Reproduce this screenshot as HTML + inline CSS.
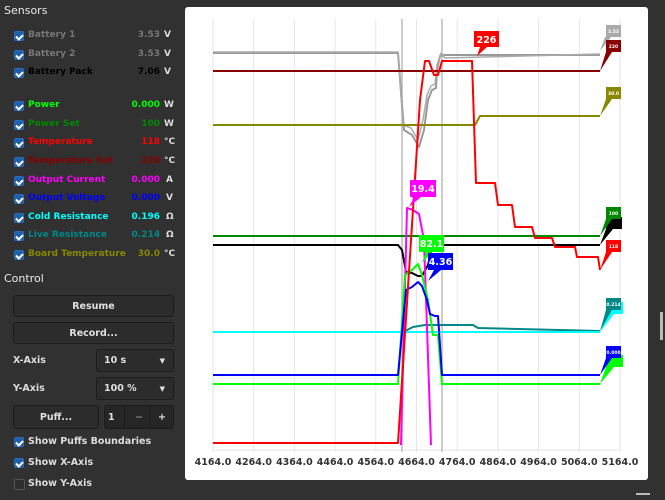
<!DOCTYPE html>
<html><head><meta charset="utf-8"><style>
*{margin:0;padding:0;box-sizing:border-box}
body{width:665px;height:500px;background:#313131;font-family:"DejaVu Sans","Liberation Sans",sans-serif;font-size:10px;color:#ddd;position:relative;overflow:hidden}
.a{position:absolute;white-space:nowrap}
.v{position:absolute;white-space:nowrap;right:505px;text-align:right}
.u{position:absolute;left:164px}
.h{font-size:11px;color:#e8e8e8}
.cb{position:absolute;width:10px;height:10px;border-radius:2px;background:#1d5fa8;border:1px solid #2a6cc0}
.cb:after{content:"";position:absolute;left:2px;top:1px;width:3px;height:5px;border:solid #fff;border-width:0 2px 2px 0;transform:rotate(45deg)}
.cbo{position:absolute;width:11px;height:11px;border-radius:2px;background:#2e2e2e;border:1px solid #555}
.b{font-weight:bold}
.btn{position:absolute;background:#2c2c2c;border:1px solid #1c1c1c;border-radius:3px;font-weight:bold;text-align:center;color:#e0e0e0;font-size:9.5px}
</style></head><body>
<div class="a h" style="left:4px;top:4px">Sensors</div>
<div class="a h" style="left:4px;top:272px">Control</div>

<div style="position:absolute;left:0;top:0;width:665px;font-weight:bold;font-size:9px">
<div class="cb" style="left:14px;top:31px"></div><div class="a" style="left:28px;top:30px;color:#777">Battery 1</div><div class="v" style="top:30px;color:#777">3.53</div><div class="u" style="top:30px">V</div>
<div class="cb" style="left:14px;top:50px"></div><div class="a" style="left:28px;top:49px;color:#777">Battery 2</div><div class="v" style="top:49px;color:#777">3.53</div><div class="u" style="top:49px">V</div>
<div class="cb" style="left:14px;top:68px"></div><div class="a" style="left:28px;top:67px;color:#000">Battery Pack</div><div class="v" style="top:67px;color:#000">7.06</div><div class="u" style="top:67px">V</div>

<div class="cb" style="left:14px;top:101px"></div><div class="a" style="left:28px;top:100px;color:#0f0">Power</div><div class="v" style="top:100px;color:#0f0">0.000</div><div class="u" style="top:100px">W</div>
<div class="cb" style="left:14px;top:120px"></div><div class="a" style="left:28px;top:119px;color:#080">Power Set</div><div class="v" style="top:119px;color:#080">100</div><div class="u" style="top:119px">W</div>
<div class="cb" style="left:14px;top:138px"></div><div class="a" style="left:28px;top:137px;color:#f00">Temperature</div><div class="v" style="top:137px;color:#f00">118</div><div class="u" style="top:137px">°C</div>
<div class="cb" style="left:14px;top:157px"></div><div class="a" style="left:28px;top:156px;color:#800">Temperature Set</div><div class="v" style="top:156px;color:#800">220</div><div class="u" style="top:156px">°C</div>
<div class="cb" style="left:14px;top:176px"></div><div class="a" style="left:28px;top:175px;color:#f0f">Output Current</div><div class="v" style="top:175px;color:#f0f">0.000</div><div class="u" style="top:175px;left:166px">A</div>
<div class="cb" style="left:14px;top:194px"></div><div class="a" style="left:28px;top:193px;color:#00f">Output Voltage</div><div class="v" style="top:193px;color:#00f">0.000</div><div class="u" style="top:193px;left:166px">V</div>
<div class="cb" style="left:14px;top:213px"></div><div class="a" style="left:28px;top:212px;color:#0ff">Cold Resistance</div><div class="v" style="top:212px;color:#0ff">0.196</div><div class="u" style="top:212px;left:166px">Ω</div>
<div class="cb" style="left:14px;top:231px"></div><div class="a" style="left:28px;top:230px;color:#088">Live Resistance</div><div class="v" style="top:230px;color:#088">0.214</div><div class="u" style="top:230px;left:166px">Ω</div>
<div class="cb" style="left:14px;top:250px"></div><div class="a" style="left:28px;top:249px;color:#880">Board Temperature</div><div class="v" style="top:249px;color:#880">30.0</div><div class="u" style="top:249px">°C</div>
</div>

<div class="btn" style="left:13px;top:295px;width:161px;height:22px;line-height:21px">Resume</div>
<div class="btn" style="left:13px;top:322px;width:161px;height:22px;line-height:21px">Record...</div>
<div class="a b" style="left:13px;top:355px;font-size:9.5px">X-Axis</div>
<div class="btn" style="left:96px;top:349px;width:78px;height:23px;line-height:22px;text-align:left;padding-left:7px">10 s<span style="position:absolute;right:8px;font-size:7px">▼</span></div>
<div class="a b" style="left:13px;top:383px;font-size:9.5px">Y-Axis</div>
<div class="btn" style="left:96px;top:377px;width:78px;height:23px;line-height:22px;text-align:left;padding-left:7px">100 %<span style="position:absolute;right:8px;font-size:7px">▼</span></div>
<div class="btn" style="left:13px;top:405px;width:86px;height:24px;line-height:23px">Puff...</div>
<div class="btn" style="left:104px;top:405px;width:70px;height:24px;line-height:23px;background:#262626;text-align:left;padding-left:3px">1<span style="position:absolute;left:19px;top:0;width:1px;height:22px;background:#1c1c1c"></span><span style="position:absolute;left:30px;color:#888">−</span><span style="position:absolute;left:44px;top:0;width:1px;height:22px;background:#1c1c1c"></span><span style="position:absolute;left:53px">+</span></div>
<div class="cb" style="left:14px;top:437px"></div><div class="a b" style="left:28px;top:436px;font-size:9.5px">Show Puffs Boundaries</div>
<div class="cb" style="left:14px;top:458px"></div><div class="a b" style="left:28px;top:457px;font-size:9.5px">Show X-Axis</div>
<div class="cbo" style="left:14px;top:479px"></div><div class="a b" style="left:28px;top:478px;font-size:9.5px">Show Y-Axis</div>

<div style="position:absolute;left:185px;top:7px;width:463px;height:473px;background:#fff;border-radius:3px"></div>
<div style="position:absolute;left:660px;top:312px;width:3px;height:28px;background:#bbb"></div>
<div style="position:absolute;left:636px;top:493px;width:14px;height:2px;background:#bbb"></div>

<svg width="665" height="500" style="position:absolute;left:0;top:0" font-family="DejaVu Sans,sans-serif">
<g stroke="#e6e6e6" stroke-width="1">
<line x1="213" y1="19" x2="213" y2="452"/><line x1="253.7" y1="19" x2="253.7" y2="452"/><line x1="294.4" y1="19" x2="294.4" y2="452"/><line x1="335.1" y1="19" x2="335.1" y2="452"/><line x1="375.8" y1="19" x2="375.8" y2="452"/><line x1="416.5" y1="19" x2="416.5" y2="452"/><line x1="457.2" y1="19" x2="457.2" y2="452"/><line x1="497.9" y1="19" x2="497.9" y2="452"/><line x1="538.6" y1="19" x2="538.6" y2="452"/><line x1="579.3" y1="19" x2="579.3" y2="452"/><line x1="620" y1="19" x2="620" y2="452"/>
<line x1="213" y1="450" x2="620" y2="450"/>
</g>
<g stroke="#bbb" stroke-width="1.5"><line x1="402" y1="19" x2="402" y2="452"/><line x1="442" y1="19" x2="442" y2="452"/></g>
<g fill="none" stroke-width="2" stroke-linejoin="round">
<polyline stroke="#999" points="213,53 398,53 404,130 412,135 419,147 424,130 428,100 432,90 436,88 437,70 440,56 444,55 600,55"/>
<polyline stroke="#aaa" stroke-width="1.5" points="213,52 398,52 403,125 411,128 418,140 423,120 427,95 431,86 435,84 437,65 441,53 445,58 600,54"/>
<polyline stroke="#800" points="213,71 600,71"/>
<polyline stroke="#880" points="213,125 475,125 480,116 600,116"/>
<polyline stroke="#080" points="213,236 600,236"/>
<polyline stroke="#000" points="213,245 398,245 402,250 406,272 412,273 418,276 422,276 428,265 432,248 442,245 600,245"/>
<polyline stroke="#088" points="213,332 403,332 413,327 425,325 473,325 478,328 600,331"/>
<polyline stroke="#0ff" points="213,332 600,332"/>
<polyline stroke="#f0f" points="401,445 407,208 413,210 419,214 424,240 431,445"/>
<polyline stroke="#0f0" points="213,384 398,384 405,275 412,270 418,264 422,275 428,300 433,335 438,335 442,384 600,384"/>
<polyline stroke="#00f" points="213,375 398,375 406,290 412,287 418,282 422,286 427,300 430,314 435,316 438,316 442,375 600,375"/>
<polyline stroke="#f00" points="213,443 398,443 420,100 425,61 429,61 434,75 438,75 442,61 472,61 476,183 495,183 498,205 512,205 515,227 532,227 535,238 552,238 555,247 575,247 577,257 598,257 600,270"/>
</g>
<g font-size="4.5" font-weight="bold" fill="#fff" text-anchor="middle">
<path d="M606,25h15v12h-10l-11,14 5,-14h1z" fill="#aaa"/><text x="613.5" y="33">3.53</text>
<path d="M606,40h15v12h-9l-12,19 6,-19z" fill="#800"/><text x="613.5" y="48">220</text>
<path d="M606,87h15v12h-9l-12,17 6,-17z" fill="#880"/><text x="613.5" y="95">30.0</text>
<path d="M608,217h14v12h-9l-13,16 6,-16z" fill="#000"/>
<path d="M606,207h15v12h-9l-12,17 6,-17z" fill="#080"/><text x="613.5" y="215">100</text>
<path d="M606,240h15v12h-9l-12,18 6,-18z" fill="#f00"/><text x="613.5" y="248">118</text>
<path d="M608,302h15v12h-9l-14,18 6,-18z" fill="#0ff"/>
<path d="M606,298h15v12h-9l-12,21 6,-21z" fill="#088"/><text x="613.5" y="306">0.214</text>
<path d="M608,355h15v12h-9l-14,17 6,-17z" fill="#0f0"/>
<path d="M606,346h15v12h-9l-12,17 6,-17z" fill="#00f"/><text x="613.5" y="354">0.000</text>
</g>
<g font-size="9.5" font-weight="bold" fill="#fff" text-anchor="middle">
<path d="M474,31h25v16h-12l-10,9 3,-9h-6z" fill="#f00"/><text x="486.5" y="43">226</text>
<path d="M410,180h26v17h-15l-12,10 5,-10h-4z" fill="#f0f"/><text x="423" y="192">19.4</text>
<path d="M419,235h25v17h-12l-10,11 4,-11h-7z" fill="#0f0"/><text x="431.5" y="247">82.1</text>
<path d="M428,253h25v17h-12l-13,11 6,-11h-6z" fill="#00f"/><text x="440.5" y="265">4.36</text>
</g>
<g font-size="9.5" font-weight="bold" fill="#333" text-anchor="middle">
<text x="213" y="465">4164.0</text><text x="253.7" y="465">4264.0</text><text x="294.4" y="465">4364.0</text><text x="335.1" y="465">4464.0</text><text x="375.8" y="465">4564.0</text><text x="416.5" y="465">4664.0</text><text x="457.2" y="465">4764.0</text><text x="497.9" y="465">4864.0</text><text x="538.6" y="465">4964.0</text><text x="579.3" y="465">5064.0</text><text x="620" y="465">5164.0</text>
</g>
</svg>
</body></html>
